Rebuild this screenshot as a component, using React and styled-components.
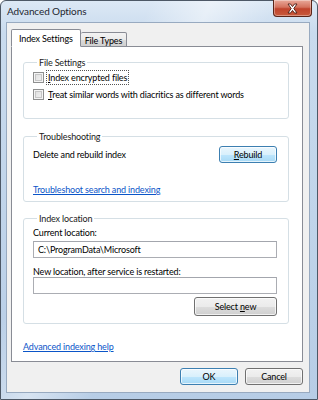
import React from 'react';
import styled, { createGlobalStyle } from 'styled-components';

const GlobalStyle = createGlobalStyle`
  html, body {
    margin: 0;
    padding: 0;
    background: #ffffff;
    overflow: hidden;
  }
  * {
    box-sizing: border-box;
  }
`;

const font = `Lato, "Noto Sans", sans-serif`;

const Frame = styled.div`
  width: 318px;
  height: 400px;
  display: flex;
  flex-direction: column;
  border: 1px solid #4d5866;
  border-radius: 6px 6px 0 0;
  padding: 0 7px 6px 5px;
  background: linear-gradient(
      115deg,
      rgba(255, 255, 255, 0) 30%,
      rgba(255, 255, 255, 0.45) 42%,
      rgba(255, 255, 255, 0) 55%
    ),
    linear-gradient(to bottom, #dce8f5 0%, #c9dbee 8%, #b7cde6 100%);
  font-family: ${font};
  font-size: 9px;
  line-height: 13px;
  letter-spacing: -0.15px;
  color: #000;
`;

const TitleBar = styled.div`
  height: 21px;
  display: flex;
  align-items: flex-start;
  flex-shrink: 0;
`;

const Title = styled.div`
  padding: 4px 0 0 1px;
  font-size: 10px;
  letter-spacing: -0.1px;
  color: #1e2530;
`;

const CloseButton = styled.div`
  margin-left: auto;
  margin-right: -2px;
  margin-top: -1px;
  width: 39px;
  height: 17px;
  border: 1px solid #5a2418;
  border-top: none;
  border-radius: 0 0 4px 4px;
  background: linear-gradient(to bottom, #e9a99a 0%, #d4725e 45%, #c0432c 55%, #c85a3c 100%);
  box-shadow: inset 0 0 0 1px rgba(255, 255, 255, 0.35);
  display: flex;
  align-items: center;
  justify-content: center;
`;

const Client = styled.div`
  flex: 1;
  display: flex;
  flex-direction: column;
  background: #f0f0f0;
  border: 1px solid #98aac0;
  padding: 6px 6px 7px 4px;
`;

const Tabs = styled.div`
  display: flex;
  align-items: flex-end;
  margin-bottom: -1px;
  position: relative;
  z-index: 1;
`;

const Tab = styled.div`
  height: ${p => (p.$active ? '18px' : '15px')};
  padding: ${p => (p.$active ? '2px 7px 0 7px' : '1px 4px 0 4px')};
  border: 1px solid #898c95;
  border-bottom: ${p => (p.$active ? '1px solid #ffffff' : '1px solid #898c95')};
  border-left: ${p => (p.$active ? '1px solid #898c95' : 'none')};
  border-radius: 2px 2px 0 0;
  background: ${p =>
    p.$active ? '#ffffff' : 'linear-gradient(to bottom, #f3f3f3 0%, #ebebeb 50%, #dcdcdc 51%, #cfcfcf 100%)'};
  white-space: nowrap;
`;

const Panel = styled.div`
  flex: 1;
  display: flex;
  flex-direction: column;
  background: #ffffff;
  border: 1px solid #898c95;
  padding: 9px 13px 8px 11px;
`;

const Group = styled.fieldset`
  margin: 0 0 ${p => p.$gap || 0}px 0;
  padding: 0 11px 0 9px;
  min-height: ${p => p.$h}px;
  border: 1px solid #d5dfe5;
  border-radius: 3px;
  display: flex;
  flex-direction: column;
`;

const Legend = styled.legend`
  padding: 0 2px;
  margin-left: 4px;
  color: #1a1a1a;
`;

const CheckRow = styled.label`
  display: flex;
  align-items: center;
  gap: 3px;
  height: 17px;
`;

const Box = styled.span`
  width: 11px;
  height: 11px;
  border: 1px solid #8e8f8f;
  background: linear-gradient(135deg, #dcdcdc 0%, #f4f4f4 100%);
  box-shadow: inset 0 0 0 1px #f4f4f4, inset 0 0 0 2px #c6c6c6;
  flex-shrink: 0;
`;

const Focused = styled.span`
  outline: ${p => (p.$focus ? '1px dotted #555' : 'none')};
  outline-offset: 0;
  padding: 0 1px;
`;

const U = styled.span`
  text-decoration: underline;
`;

const Row = styled.div`
  display: flex;
  align-items: center;
  justify-content: space-between;
  margin-top: ${p => p.$mt || 0}px;
`;

const Text = styled.div`
  margin-top: ${p => p.$mt || 0}px;
`;

const Link = styled.a`
  color: #0b55c8;
  text-decoration: underline;
  cursor: pointer;
  margin-top: ${p => (p.$auto ? 'auto' : `${p.$mt || 0}px`)};
  align-self: flex-start;
`;

const Button = styled.button`
  font-family: ${font};
  font-size: 9px;
  letter-spacing: -0.15px;
  color: #000;
  width: ${p => p.$w}px;
  height: ${p => p.$h || 17}px;
  padding: 0;
  border-radius: 3px;
  border: 1px solid ${p => (p.$blue ? '#3c7fb1' : '#707070')};
  background: ${p =>
    p.$blue
      ? 'linear-gradient(to bottom, #eaf6fd 0%, #d9f0fc 50%, #bee6fd 51%, #a7d9f5 100%)'
      : 'linear-gradient(to bottom, #f2f2f2 0%, #ebebeb 50%, #dddddd 51%, #cfcfcf 100%)'};
  box-shadow: inset 0 0 0 1px rgba(255, 255, 255, 0.7);
  align-self: ${p => (p.$end ? 'flex-end' : 'auto')};
  margin-top: ${p => p.$mt || 0}px;
`;

const Input = styled.div`
  height: 17px;
  border: 1px solid #abadb3;
  border-top-color: #a3a6ad;
  background: #ffffff;
  padding: 0 4px;
  display: flex;
  align-items: center;
  margin-top: ${p => p.$mt || 0}px;
`;

const Footer = styled.div`
  display: flex;
  justify-content: flex-end;
  gap: 7px;
  margin-top: 6px;
`;

function CloseGlyph() {
  return (
    <svg width="13" height="11" viewBox="0 0 13 11">
      <path
        d="M2 1 L4.5 1 L6.5 3.6 L8.5 1 L11 1 L7.8 5.5 L11 10 L8.5 10 L6.5 7.4 L4.5 10 L2 10 L5.2 5.5 Z"
        fill="#ffffff"
        stroke="#4a1c14"
        strokeWidth="0.9"
        strokeLinejoin="round"
      />
    </svg>
  );
}

export default function App() {
  return (
    <>
      <GlobalStyle />
      <Frame>
        <TitleBar>
          <Title>Advanced Options</Title>
          <CloseButton>
            <CloseGlyph />
          </CloseButton>
        </TitleBar>
        <Client>
          <Tabs>
            <Tab $active>Index Settings</Tab>
            <Tab>File Types</Tab>
          </Tabs>
          <Panel>
            <Group $h={63} $gap={11}>
              <Legend>File Settings</Legend>
              <CheckRow>
                <Box />
                <Focused $focus>
                  <U>I</U>ndex encrypted files
                </Focused>
              </CheckRow>
              <CheckRow>
                <Box />
                <Focused>
                  <U>T</U>reat similar words with diacritics as different words
                </Focused>
              </CheckRow>
            </Group>

            <Group $h={72} $gap={10}>
              <Legend>Troubleshooting</Legend>
              <Row $mt={3}>
                <Text>Delete and rebuild index</Text>
                <Button $w={58} $blue>
                  <U>R</U>ebuild
                </Button>
              </Row>
              <Link $mt={20}>Troubleshoot search and indexing</Link>
            </Group>

            <Group $h={112}>
              <Legend>Index location</Legend>
              <Text $mt={1}>Current location:</Text>
              <Input $mt={2}>C:\ProgramData\Microsoft</Input>
              <Text $mt={7}>New location, after service is restarted:</Text>
              <Input $mt={-1} />
              <Button $w={83} $h={19} $end $mt={3}>
                Select <U>n</U>ew
              </Button>
            </Group>

            <Link $auto>Advanced indexing help</Link>
          </Panel>
          <Footer>
            <Button $w={58} $blue>
              OK
            </Button>
            <Button $w={58}>Cancel</Button>
          </Footer>
        </Client>
      </Frame>
    </>
  );
}
